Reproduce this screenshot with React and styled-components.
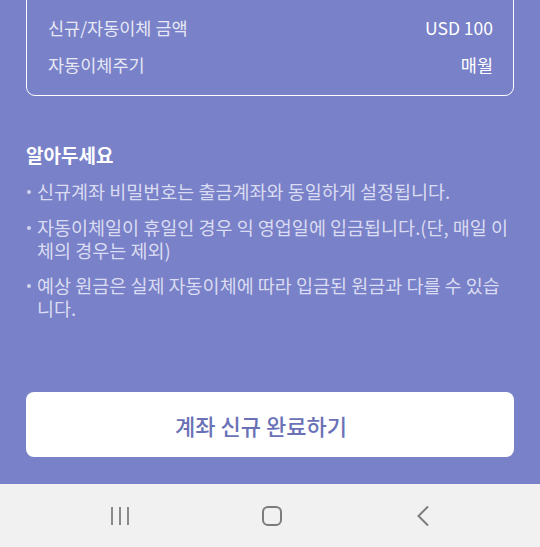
import React from 'react';
import styled, { createGlobalStyle } from 'styled-components';

const GlobalStyle = createGlobalStyle`
  html, body {
    margin: 0;
    padding: 0;
    width: 540px;
    height: 547px;
    overflow: hidden;
  }
  body {
    font-family: 'Noto Sans CJK KR', 'Noto Sans', sans-serif;
  }
`;

const summary = [
  { label: '신규/자동이체 금액', value: 'USD 100' },
  { label: '자동이체주기', value: '매월' },
];

const notices = [
  '신규계좌 비밀번호는 출금계좌와 동일하게 설정됩니다.',
  '자동이체일이 휴일인 경우 익 영업일에 입금됩니다.(단, 매일 이체의 경우는 제외)',
  '예상 원금은 실제 자동이체에 따라 입금된 원금과 다를 수 있습니다.',
];

const App = () => {
  return (
    <Screen>
      <GlobalStyle />
      <Main>
        <SummaryCard>
          {summary.map(row => (
            <SummaryRow key={row.label}>
              <RowLabel>{row.label}</RowLabel>
              <RowValue>{row.value}</RowValue>
            </SummaryRow>
          ))}
        </SummaryCard>
        <Notice>
          <NoticeTitle>알아두세요</NoticeTitle>
          <NoticeList>
            {notices.map(text => (
              <NoticeItem key={text}>{text}</NoticeItem>
            ))}
          </NoticeList>
        </Notice>
        <CompleteButton type="button">계좌 신규 완료하기</CompleteButton>
      </Main>
      <NavBar>
        <NavButton aria-label="최근 앱">
          <svg width="24" height="24" viewBox="0 0 24 24">
            <g stroke="#8a8a8a" strokeWidth="2">
              <line x1="4" y1="3" x2="4" y2="21" />
              <line x1="12" y1="3" x2="12" y2="21" />
              <line x1="20" y1="3" x2="20" y2="21" />
            </g>
          </svg>
        </NavButton>
        <NavButton aria-label="홈">
          <svg width="24" height="24" viewBox="0 0 24 24">
            <rect x="3" y="3" width="18" height="18" rx="5" fill="none" stroke="#7c7c7c" strokeWidth="2" />
          </svg>
        </NavButton>
        <NavButton aria-label="뒤로">
          <svg width="24" height="24" viewBox="0 0 24 24">
            <polyline points="17,2.5 7.5,12 17,21.5" fill="none" stroke="#7c7c7c" strokeWidth="2" />
          </svg>
        </NavButton>
      </NavBar>
    </Screen>
  );
};

const Screen = styled.div`
  display: flex;
  flex-direction: column;
  width: 540px;
  height: 547px;
  overflow: hidden;
`;

const Main = styled.div`
  display: flex;
  flex-direction: column;
  height: 484px;
  padding: 0 26px 27px;
  box-sizing: border-box;
  background-color: #7981c8;
`;

const SummaryCard = styled.div`
  margin-top: -20px;
  padding: 28px 20px 12px 21px;
  border: 1.5px solid #ffffff;
  border-radius: 9px;
`;

const SummaryRow = styled.div`
  display: flex;
  justify-content: space-between;
  align-items: center;
  height: 37px;
  font-size: 17.5px;
`;

const RowLabel = styled.span`
  color: #e6e8f6;
`;

const RowValue = styled.span`
  color: #ffffff;
`;

const Notice = styled.div`
  margin-top: 47px;
`;

const NoticeTitle = styled.div`
  font-size: 19px;
  line-height: 24px;
  font-weight: bold;
  color: #ffffff;
`;

const NoticeList = styled.ul`
  list-style: none;
  margin: 13px 0 0;
  padding: 0;
  display: flex;
  flex-direction: column;
  gap: 12.5px;
`;

const NoticeItem = styled.li`
  position: relative;
  padding-left: 11px;
  font-size: 18.5px;
  line-height: 23px;
  color: #d9dcf2;
  &:before {
    content: '';
    position: absolute;
    left: 1px;
    top: 10px;
    width: 4px;
    height: 4px;
    border-radius: 50%;
    background-color: #d0d3ee;
  }
`;

const CompleteButton = styled.button`
  margin-top: auto;
  height: 65px;
  padding: 0 18px 0 0;
  border: none;
  border-radius: 8px;
  background-color: #ffffff;
  font-family: 'Noto Sans CJK KR', 'Noto Sans', sans-serif;
  font-size: 22px;
  font-weight: 500;
  color: #6a71b6;
`;

const NavBar = styled.div`
  display: flex;
  justify-content: space-between;
  align-items: center;
  height: 63px;
  padding: 0 105px 0 108px;
  background-color: #f1f1f1;
`;

const NavButton = styled.div`
  display: flex;
  align-items: center;
  justify-content: center;
  width: 24px;
  height: 24px;
`;

export default App;
